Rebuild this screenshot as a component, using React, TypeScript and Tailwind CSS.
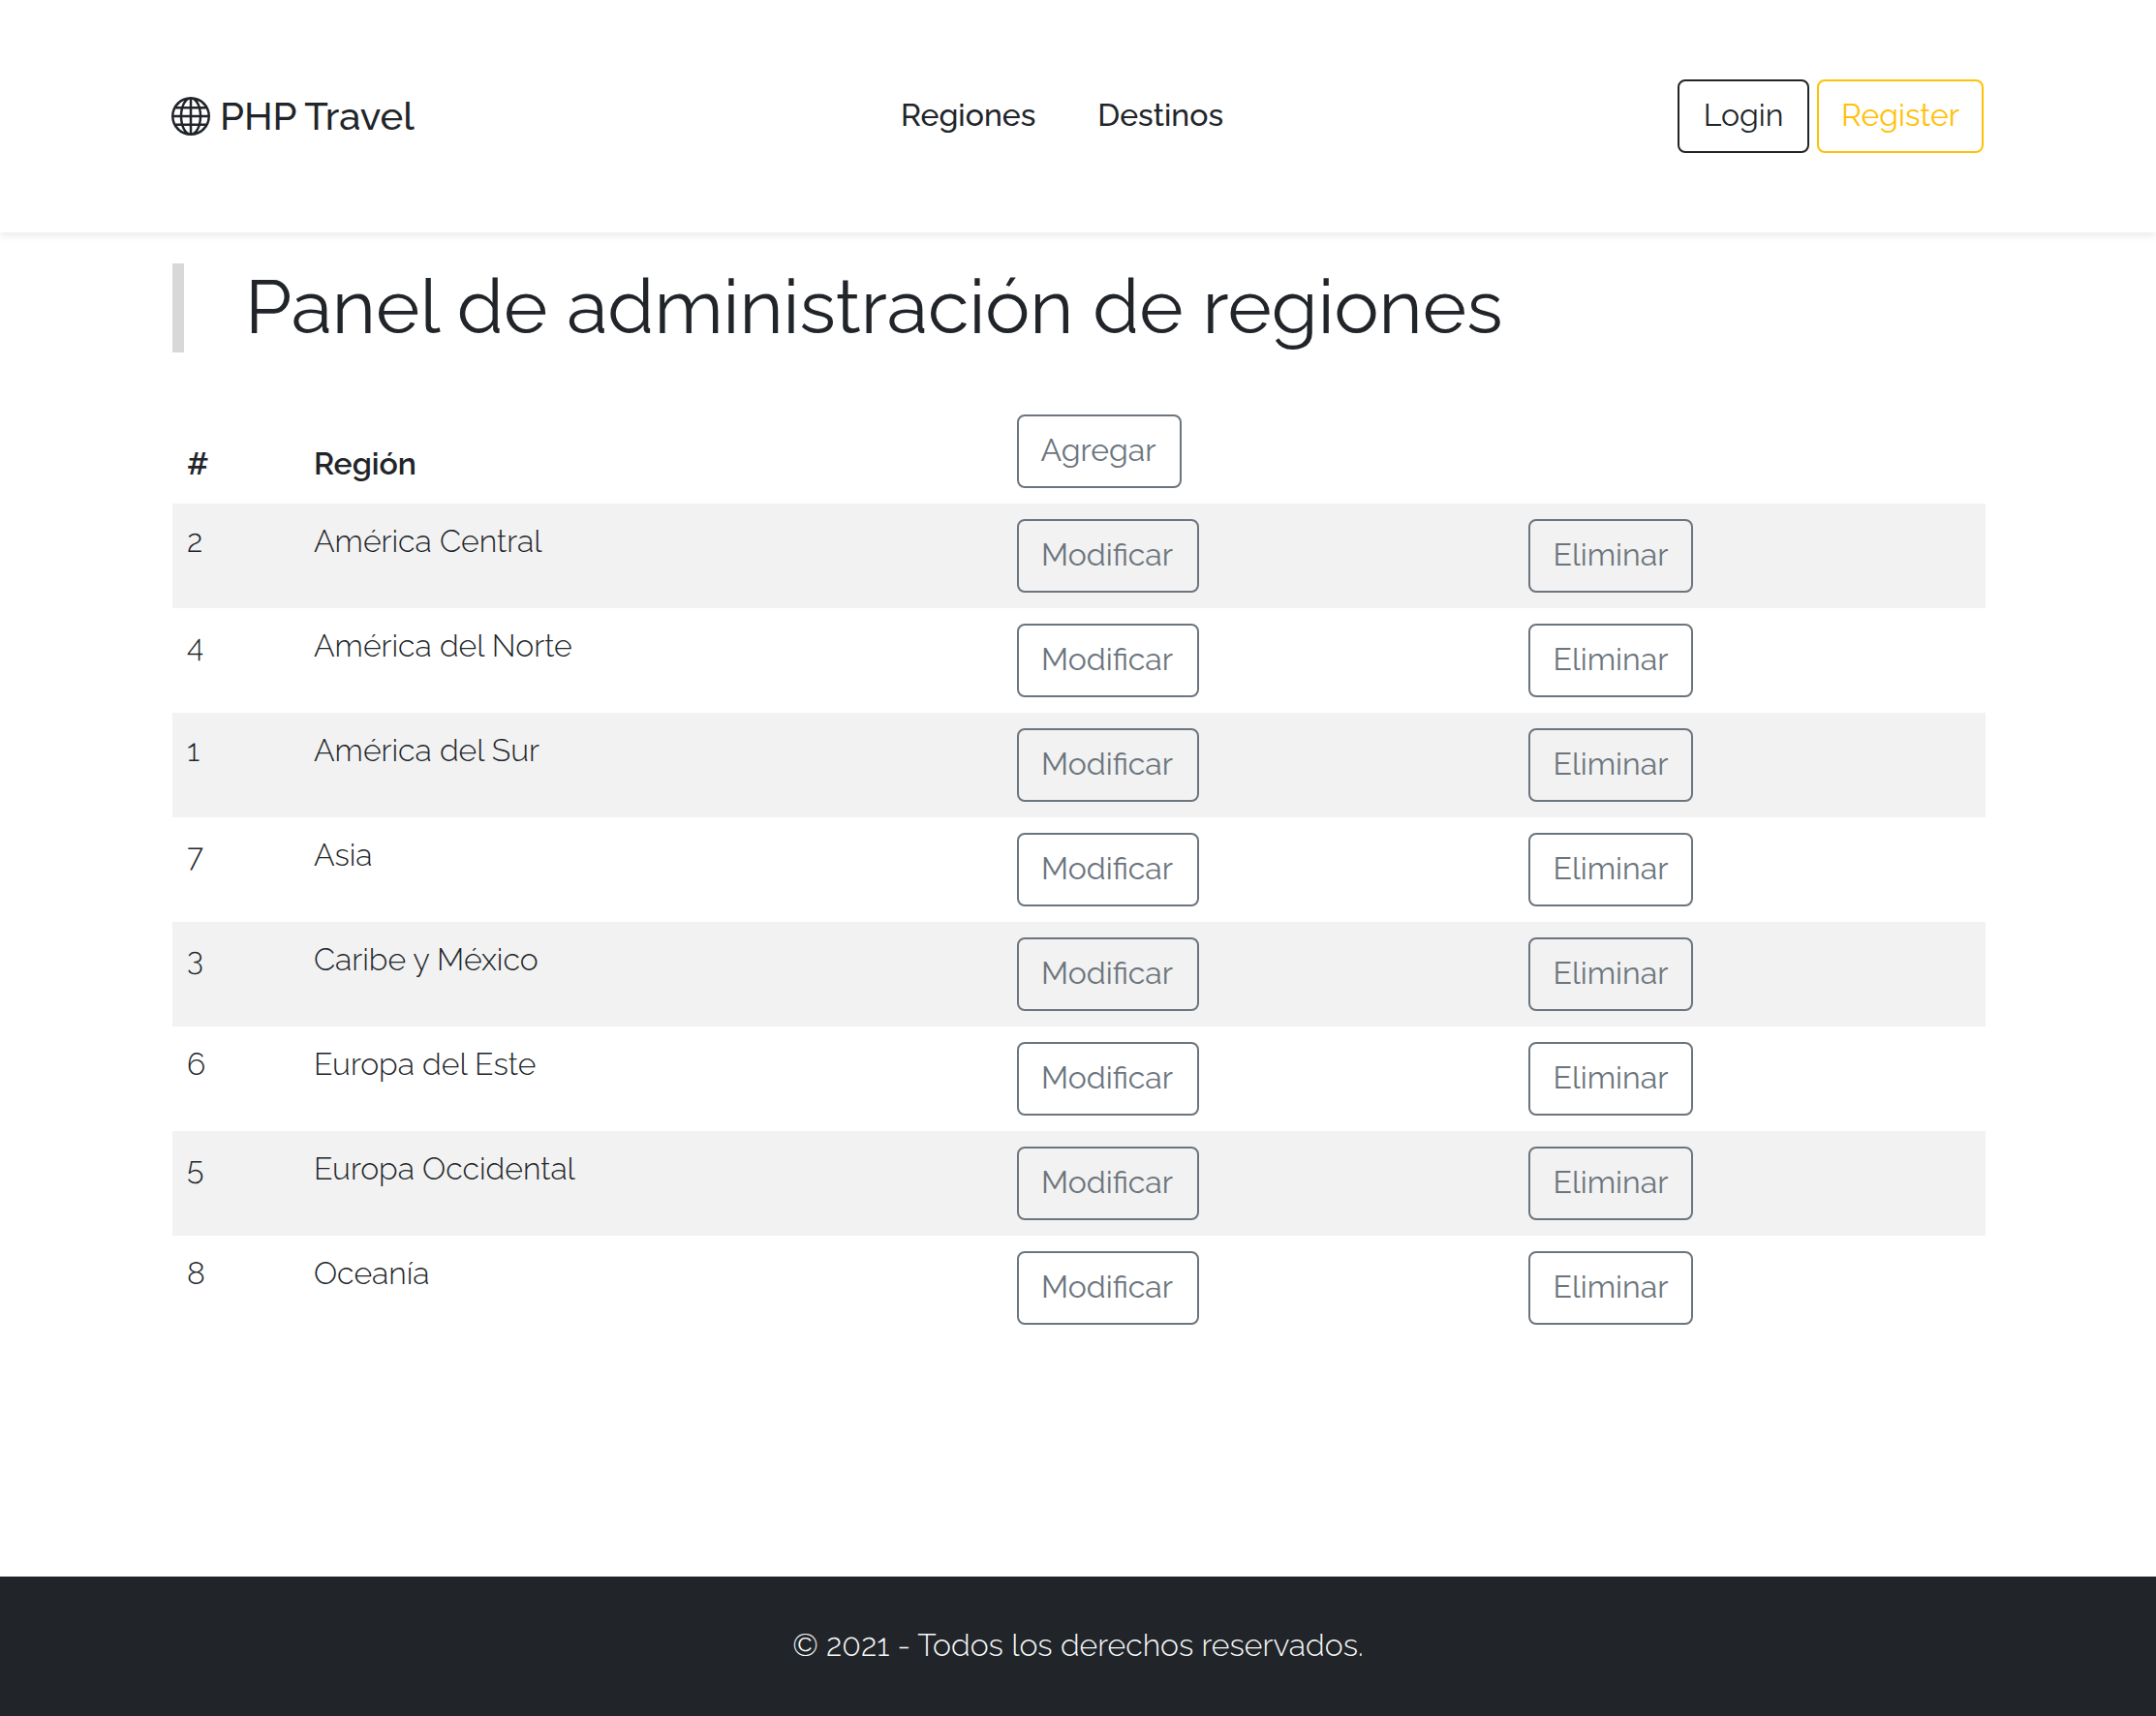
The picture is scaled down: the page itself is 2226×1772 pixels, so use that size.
import type { ReactNode } from 'react'
import { BsGlobe } from 'react-icons/bs'

type Region = { id: number; name: string }

const regions: Region[] = [
  { id: 2, name: 'América Central' },
  { id: 4, name: 'América del Norte' },
  { id: 1, name: 'América del Sur' },
  { id: 7, name: 'Asia' },
  { id: 3, name: 'Caribe y México' },
  { id: 6, name: 'Europa del Este' },
  { id: 5, name: 'Europa Occidental' },
  { id: 8, name: 'Oceanía' },
]

const tones = {
  dark: 'border-[#212529] text-[#212529]',
  warning: 'border-[#ffc107] text-[#ffc107]',
  secondary: 'border-[#6c757d] text-[#6c757d]',
}

type ButtonProps = { tone: keyof typeof tones; width: string; children: ReactNode }

function Button({ tone, width, children }: ButtonProps) {
  return (
    <a
      href="#"
      className={`flex h-[76px] items-center justify-center rounded-lg border-2 pb-0.5 text-[32px] leading-[46px] font-normal whitespace-nowrap ${width} ${tones[tone]}`}
    >
      {children}
    </a>
  )
}

function Header() {
  return (
    <header className="h-60 bg-white shadow-[0_4px_8px_rgba(0,0,0,0.075)]">
      <div className="ml-[177px] flex h-full w-[1871px] items-center">
        <a href="#" className="flex w-[753px] items-center text-[40px] leading-[60px] font-medium">
          <BsGlobe className="mr-2.5 size-10" />
          PHP Travel
        </a>
        <nav className="flex gap-16 pb-0.5 text-[32px] leading-[46px] font-medium">
          <a href="#">Regiones</a>
          <a href="#">Destinos</a>
        </nav>
        <div className="ml-auto flex gap-2">
          <Button tone="dark" width="w-[136px]">Login</Button>
          <Button tone="warning" width="w-[172px]">Register</Button>
        </div>
      </div>
    </header>
  )
}

function RegionTable() {
  return (
    <table className="mt-12 w-full table-fixed border-collapse text-left text-[32px] leading-[46px]">
      <colgroup>
        <col className="w-[130px]" />
        <col className="w-[726px]" />
        <col className="w-[528px]" />
        <col />
      </colgroup>
      <thead>
        <tr className="h-[108px]">
          <th className="pr-4 pb-[18px] pl-[15px] align-bottom font-semibold">#</th>
          <th className="px-4 pb-[18px] align-bottom font-semibold">Región</th>
          <th className="p-4 align-bottom">
            <Button tone="secondary" width="w-[170px] pr-0.5">Agregar</Button>
          </th>
          <th />
        </tr>
      </thead>
      <tbody>
        {regions.map((r) => (
          <tr key={r.id} className="h-[108px] font-light odd:bg-[#f2f2f2]">
            <td className="py-4 pr-4 pl-[15px] align-top">{r.id}</td>
            <td className="p-4 align-top">{r.name}</td>
            <td className="p-4 align-top">
              <Button tone="secondary" width="w-[188px] pr-0.5">Modificar</Button>
            </td>
            <td className="p-4 align-top">
              <Button tone="secondary" width="w-[170px]">Eliminar</Button>
            </td>
          </tr>
        ))}
      </tbody>
    </table>
  )
}

export default function App() {
  return (
    <div className="flex min-h-[1772px] flex-col bg-white font-['Raleway','Lato',sans-serif] text-[#212529]">
      <Header />
      <main className="mt-8 ml-[178px] w-[1872px] flex-1">
        <h1 className="border-l-[12px] border-[#d8d8d8] pb-[3px] pl-[63px] text-[77.4px] leading-[89px] font-normal">
          Panel de administración de regiones
        </h1>
        <RegionTable />
      </main>
      <footer className="flex h-36 items-center justify-center bg-[#212529] pb-0.5 text-[32px] leading-[46px] font-light text-[#f8f9fa]">
        © 2021 - Todos los derechos reservados.
      </footer>
    </div>
  )
}
